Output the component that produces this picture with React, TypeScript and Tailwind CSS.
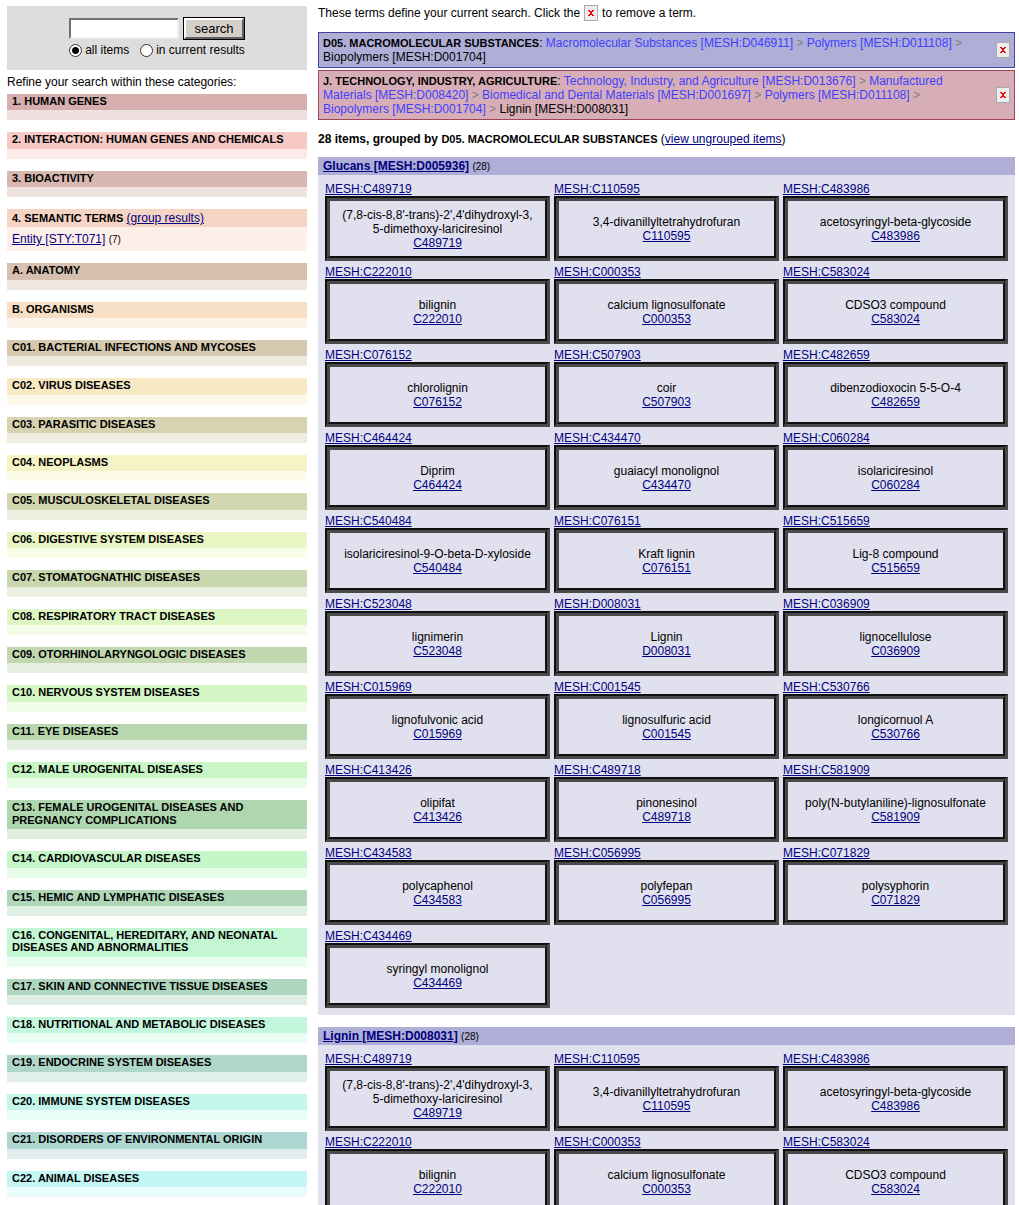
import React from "react";

type Category = { title: string; head: string; body: string };
type Item = [string, string];

const firstCategories: Category[] = [
  { title: "1. HUMAN GENES", head: "bg-[#d7afaf]", body: "bg-[#efe0e0]" },
  { title: "2. INTERACTION: HUMAN GENES AND CHEMICALS", head: "bg-[#f6c9c4]", body: "bg-[#fde9e8]" },
  { title: "3. BIOACTIVITY", head: "bg-[#d7b7af]", body: "bg-[#efe3e0]" },
];

const categories: Category[] = [
  { title: "A. ANATOMY", head: "bg-[#d7c0af]", body: "bg-[#efe6e0]" },
  { title: "B. ORGANISMS", head: "bg-[#f6dfc4]", body: "bg-[#fdf3e8]" },
  { title: "C01. BACTERIAL INFECTIONS AND MYCOSES", head: "bg-[#d7c9af]", body: "bg-[#efeae0]" },
  { title: "C02. VIRUS DISEASES", head: "bg-[#f6e9c4]", body: "bg-[#fdf8e8]" },
  { title: "C03. PARASITIC DISEASES", head: "bg-[#d7d2af]", body: "bg-[#efede0]" },
  { title: "C04. NEOPLASMS", head: "bg-[#f6f4c4]", body: "bg-[#fdfce8]" },
  { title: "C05. MUSCULOSKELETAL DISEASES", head: "bg-[#d2d7af]", body: "bg-[#edefe0]" },
  { title: "C06. DIGESTIVE SYSTEM DISEASES", head: "bg-[#e9f6c4]", body: "bg-[#f8fde8]" },
  { title: "C07. STOMATOGNATHIC DISEASES", head: "bg-[#c9d7af]", body: "bg-[#eaefe0]" },
  { title: "C08. RESPIRATORY TRACT DISEASES", head: "bg-[#def6c4]", body: "bg-[#f3fde8]" },
  { title: "C09. OTORHINOLARYNGOLOGIC DISEASES", head: "bg-[#c0d7af]", body: "bg-[#e6efe0]" },
  { title: "C10. NERVOUS SYSTEM DISEASES", head: "bg-[#d3f6c4]", body: "bg-[#effde8]" },
  { title: "C11. EYE DISEASES", head: "bg-[#b7d7af]", body: "bg-[#e3efe0]" },
  { title: "C12. MALE UROGENITAL DISEASES", head: "bg-[#c8f6c4]", body: "bg-[#e9fde8]" },
  { title: "C13. FEMALE UROGENITAL DISEASES AND PREGNANCY COMPLICATIONS", head: "bg-[#afd7af]", body: "bg-[#e0efe0]" },
  { title: "C14. CARDIOVASCULAR DISEASES", head: "bg-[#c4f6c8]", body: "bg-[#e8fde9]" },
  { title: "C15. HEMIC AND LYMPHATIC DISEASES", head: "bg-[#afd7b7]", body: "bg-[#e0efe3]" },
  { title: "C16. CONGENITAL, HEREDITARY, AND NEONATAL DISEASES AND ABNORMALITIES", head: "bg-[#c4f6d3]", body: "bg-[#e8fdef]" },
  { title: "C17. SKIN AND CONNECTIVE TISSUE DISEASES", head: "bg-[#afd7c0]", body: "bg-[#e0efe6]" },
  { title: "C18. NUTRITIONAL AND METABOLIC DISEASES", head: "bg-[#c4f6de]", body: "bg-[#e8fdf3]" },
  { title: "C19. ENDOCRINE SYSTEM DISEASES", head: "bg-[#afd7c9]", body: "bg-[#e0efea]" },
  { title: "C20. IMMUNE SYSTEM DISEASES", head: "bg-[#c4f6e9]", body: "bg-[#e8fdf8]" },
  { title: "C21. DISORDERS OF ENVIRONMENTAL ORIGIN", head: "bg-[#afd7d2]", body: "bg-[#e0efed]" },
  { title: "C22. ANIMAL DISEASES", head: "bg-[#c4f6f4]", body: "bg-[#e8fdfc]" },
];

const items: Item[] = [
  ["C489719", "(7,8-cis-8,8'-trans)-2',4'dihydroxyl-3, 5-dimethoxy-lariciresinol"],
  ["C110595", "3,4-divanillyltetrahydrofuran"],
  ["C483986", "acetosyringyl-beta-glycoside"],
  ["C222010", "bilignin"],
  ["C000353", "calcium lignosulfonate"],
  ["C583024", "CDSO3 compound"],
  ["C076152", "chlorolignin"],
  ["C507903", "coir"],
  ["C482659", "dibenzodioxocin 5-5-O-4"],
  ["C464424", "Diprim"],
  ["C434470", "guaiacyl monolignol"],
  ["C060284", "isolariciresinol"],
  ["C540484", "isolariciresinol-9-O-beta-D-xyloside"],
  ["C076151", "Kraft lignin"],
  ["C515659", "Lig-8 compound"],
  ["C523048", "lignimerin"],
  ["D008031", "Lignin"],
  ["C036909", "lignocellulose"],
  ["C015969", "lignofulvonic acid"],
  ["C001545", "lignosulfuric acid"],
  ["C530766", "longicornuol A"],
  ["C413426", "olipifat"],
  ["C489718", "pinonesinol"],
  ["C581909", "poly(N-butylaniline)-lignosulfonate"],
  ["C434583", "polycaphenol"],
  ["C056995", "polyfepan"],
  ["C071829", "polysyphorin"],
  ["C434469", "syringyl monolignol"],
];

const linkClass = "text-[#000080] underline";

function CategoryBlock({ title, head, body }: Category) {
  return (
    <section className="mb-3">
      <h2 className={`px-[5px] pt-px pb-[3px] text-[11px] leading-[1.125] font-bold ${head}`}>{title}</h2>
      <div className={`h-[10px] ${body}`} />
    </section>
  );
}

function Cross() {
  return (
    <svg viewBox="0 0 6 6" className="h-[6px] w-[6px]" shapeRendering="crispEdges" aria-hidden="true">
      <path
        d="M0 0h2v1H0zM4 0h2v1H4zM1 1h4v1H1zM2 2h2v2H2zM1 4h4v1H1zM0 5h2v1H0zM4 5h2v1H4z"
        fill="#f00000"
      />
    </svg>
  );
}

function RemoveButton() {
  return (
    <button
      type="button"
      aria-label="Remove term"
      className="flex h-4 w-[14px] shrink-0 items-center justify-center border border-[#aaaaaa] bg-[#eeeeee]"
    >
      <Cross />
    </button>
  );
}

function Trail({ category, links, current }: { category: string; links: string[]; current: string }) {
  return (
    <p className="w-[640px] max-w-full">
      <b className="text-[11px]">{category}</b>:{" "}
      {links.map((l) => (
        <React.Fragment key={l}>
          <a href="#" className="text-[#4040ff]">
            {l}
          </a>{" "}
          <span className="text-[#808080]">&gt;</span>{" "}
        </React.Fragment>
      ))}
      {current}
    </p>
  );
}

function Group({ name, entries }: { name: string; entries: Item[] }) {
  return (
    <section className="mb-3 bg-[#e1e0ee]">
      <h2 className="h-[18px] bg-[#afaed7] px-[5px] pt-[2px] leading-[14px] whitespace-nowrap">
        <a href="#" className={`font-bold ${linkClass}`}>
          {name}
        </a>{" "}
        <span className="text-[10px]">(28)</span>
      </h2>
      <div className="grid grid-cols-3 gap-1 p-[7px]">
        {entries.map(([id, label]) => (
          <article key={id}>
            <a href="#" className={`block leading-[14px] ${linkClass}`}>
              MESH:{id}
            </a>
            <div className="border-t-2 border-r-3 border-b-3 border-l-2 border-t-[#101010] border-r-[#4a4a4a] border-b-[#4a4a4a] border-l-[#101010]">
              <div className="flex h-[60px] flex-col items-center justify-center border-t-3 border-r-2 border-b-2 border-l-3 border-t-[#4a4a4a] border-r-[#101010] border-b-[#101010] border-l-[#4a4a4a] px-2 text-center leading-[14px]">
                <span className="max-w-[196px]">{label}</span>
                <a href="#" className={linkClass}>
                  {id}
                </a>
              </div>
            </div>
          </article>
        ))}
      </div>
    </section>
  );
}

export default function App() {
  return (
    <div
      className="flex gap-[11px] pt-[6px] pr-1 pl-[7px] text-[12px] leading-[14px] text-black"
      style={{ fontFamily: '"Liberation Sans", Arial, sans-serif' }}
    >
      <aside className="w-[300px] shrink-0">
        <form className="h-16 bg-[#dddddd] pt-[11px]" onSubmit={(e) => e.preventDefault()}>
          <div className="flex items-center justify-center gap-1">
            <input
              type="text"
              aria-label="Search terms"
              className="h-[21px] w-[110px] border-2 border-t-[#707070] border-r-[#eeeeee] border-b-[#eeeeee] border-l-[#707070] bg-white px-1"
            />
            <button type="submit" className="h-[23px] w-[62px] border border-black text-[13px]">
              <span className="flex h-full w-full items-center justify-center border-2 border-t-white border-r-[#606060] border-b-[#606060] border-l-white bg-[#d4d0c8]">
                search
              </span>
            </button>
          </div>
          <div className="mt-[3px] flex items-center justify-center gap-[11px]">
            <label className="flex items-center gap-[3px]">
              <input
                type="radio"
                name="scope"
                defaultChecked
                className="h-[13px] w-[13px] appearance-none rounded-full border border-[#333333] bg-white checked:bg-[radial-gradient(circle,#000_0_3px,transparent_4px)]"
              />
              all items
            </label>
            <label className="flex items-center gap-[3px]">
              <input
                type="radio"
                name="scope"
                className="h-[13px] w-[13px] appearance-none rounded-full border border-[#333333] bg-white checked:bg-[radial-gradient(circle,#000_0_3px,transparent_4px)]"
              />
              in current results
            </label>
          </div>
        </form>
        <p className="pt-[5px] pb-[5px]">Refine your search within these categories:</p>
        {firstCategories.map((c) => (
          <CategoryBlock key={c.title} {...c} />
        ))}
        <section className="mb-3">
          <h2 className="bg-[#f6d4c4] px-[5px] pt-[2px] pb-[2px]">
            <b className="text-[11px]">4. SEMANTIC TERMS</b>{" "}
            <a href="#" className={linkClass}>
              (group results)
            </a>
          </h2>
          <p className="bg-[#fdefe8] px-[5px] pt-[5px] pb-1">
            <a href="#" className={linkClass}>
              Entity [STY:T071]
            </a>{" "}
            <span className="text-[10px]">(7)</span>
          </p>
        </section>
        {categories.map((c) => (
          <CategoryBlock key={c.title} {...c} />
        ))}
      </aside>

      <main className="min-w-0 flex-1">
        <div className="mb-3 flex h-[14px] items-center gap-1">
          <span>These terms define your current search. Click the</span>
          <RemoveButton />
          <span>to remove a term.</span>
        </div>
        <div className="mb-[2px] flex items-center justify-between border border-[#4644a0] bg-[#afaed7] py-[3px] pr-1 pl-1">
          <Trail
            category="D05. MACROMOLECULAR SUBSTANCES"
            links={["Macromolecular Substances [MESH:D046911]", "Polymers [MESH:D011108]"]}
            current="Biopolymers [MESH:D001704]"
          />
          <RemoveButton />
        </div>
        <div className="flex items-center justify-between border border-[#a04458] bg-[#d7aeb7] py-[3px] pr-1 pl-1">
          <Trail
            category="J. TECHNOLOGY, INDUSTRY, AGRICULTURE"
            links={[
              "Technology, Industry, and Agriculture [MESH:D013676]",
              "Manufactured Materials [MESH:D008420]",
              "Biomedical and Dental Materials [MESH:D001697]",
              "Polymers [MESH:D011108]",
              "Biopolymers [MESH:D001704]",
            ]}
            current="Lignin [MESH:D008031]"
          />
          <RemoveButton />
        </div>
        <h1 className="pt-3 pb-[11px]">
          <b>28 items, grouped by </b>
          <b className="text-[11px]">D05. MACROMOLECULAR SUBSTANCES</b> (
          <a href="#" className={linkClass}>
            view ungrouped items
          </a>
          )
        </h1>
        <Group name="Glucans [MESH:D005936]" entries={items} />
        <Group name="Lignin [MESH:D008031]" entries={items.slice(0, 6)} />
      </main>
    </div>
  );
}
